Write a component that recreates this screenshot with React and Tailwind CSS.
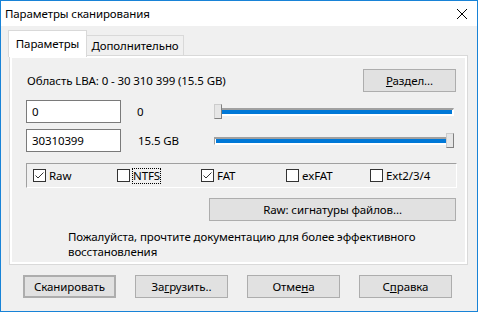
import React from "react";

const font = { fontFamily: '"Noto Sans", "Open Sans", sans-serif' };

const Btn = ({ children, className = "" }) => (
  <div
    className={`flex items-center justify-center h-[23px] w-[93px] bg-[#e1e1e1] border border-[#adadad] text-[11.5px] text-black ${className}`}
  >
    {children}
  </div>
);

const Slider = ({ atEnd }) => (
  <div className="relative w-[240px] h-[16px] flex items-center">
    <div className="w-full h-[8px] border-t-2 border-l border-t-[#a0a0a0] border-l-[#a0a0a0] border-b border-r border-b-white border-r-white bg-white flex items-center px-[1px]">
      <div className="w-full h-[4px] bg-[#0078d7]" />
    </div>
    <div
      className={`absolute top-0 h-[15px] w-[8px] bg-[#e6e6e6] border border-[#cccccc] border-r-[#808080] border-b-[#808080] ${
        atEnd ? "right-0" : "left-0"
      }`}
    />
  </div>
);

const Check = ({ label, checked, focus }) => (
  <div className="flex items-center">
    <div className="w-[13px] h-[13px] border border-[#333333] bg-white flex items-center justify-center">
      {checked && (
        <svg width="11" height="11" viewBox="0 0 11 11">
          <polyline points="1.5,5.5 4,8 9.5,2.5" fill="none" stroke="#333333" strokeWidth="1" />
        </svg>
      )}
    </div>
    <span
      className={`ml-[3px] leading-[14px] text-[11.5px] text-black ${
        focus ? "outline outline-1 outline-dotted outline-black" : ""
      }`}
    >
      {label}
    </span>
  </div>
);

export default function App() {
  return (
    <div
      className="w-[478px] h-[312px] border border-[#1883d7] bg-[#f0f0f0] flex flex-col text-black tracking-[-0.1px]"
      style={font}
    >
      <div className="h-[25px] bg-white flex items-center justify-between pl-[4px] pr-[9px]">
        <span className="text-[11.5px]">Параметры сканирования</span>
        <svg width="12" height="12" viewBox="0 0 12 12">
          <path d="M1 1 L11 11 M11 1 L1 11" stroke="#000" strokeWidth="1" />
        </svg>
      </div>

      <div className="flex flex-col pl-[7px]">
        <div className="flex items-end mt-[4px] relative z-10">
          <div className="h-[27px] w-[79px] bg-white border border-b-0 border-[#d9d9d9] flex items-center justify-center text-[11.5px] pb-[1px]">
            Параметры
          </div>
          <div className="h-[21px] w-[97px] bg-[#f0f0f0] border border-l-0 border-[#d9d9d9] flex items-center justify-center text-[11.5px] mb-[1px]">
            Дополнительно
          </div>
        </div>

        <div className="-mt-[2px] ml-[1px] w-[459px] h-[210px] border border-[#d9d9d9] bg-white p-[2px]">
          <div className="h-full bg-[#f0f0f0] flex flex-col pl-[14px] pr-[9px] pt-[11px]">
            <div className="flex items-center justify-between">
              <span className="text-[11.5px] ml-[1px]">Область LBA: 0 - 30 310 399 (15.5 GB)</span>
              <Btn className="h-[21px]">
                <span>
                  <span className="underline">Р</span>аздел...
                </span>
              </Btn>
            </div>

            <div className="flex items-center mt-[8px]">
              <div className="w-[95px] h-[23px] border border-[#7a7a7a] bg-white text-[11.5px] flex items-center pl-[5px]">
                0
              </div>
              <span className="ml-[16px] w-[77px] text-[11.5px]">0</span>
              <Slider />
            </div>

            <div className="flex items-center mt-[6px]">
              <div className="w-[95px] h-[23px] border border-[#7a7a7a] bg-white text-[11.5px] flex items-center pl-[5px]">
                30310399
              </div>
              <span className="ml-[17px] w-[76px] text-[11.5px]">15.5 GB</span>
              <Slider atEnd />
            </div>

            <div className="mt-[11px] w-[431px] h-[25px] border border-t-[#a0a0a0] border-l-[#a0a0a0] border-b-white border-r-white grid grid-cols-[84px_84px_85px_84px_1fr] items-center pl-[6px]">
              <Check label="Raw" checked />
              <Check label="NTFS" focus />
              <Check label="FAT" checked />
              <Check label="exFAT" />
              <Check label="Ext2/3/4" />
            </div>

            <div className="flex justify-end mt-[10px]">
              <Btn className="w-[247px] h-[21px]">Raw: сигнатуры файлов...</Btn>
            </div>

            <p className="mt-[8px] ml-[42px] text-[11.5px] leading-[15px]">
              Пожалуйста, прочтите документацию для более эффективного
              <br />
              восстановления
            </p>
          </div>
        </div>

        <div className="flex gap-[19px] mt-[10px] ml-[15px]">
          <Btn className="border-2 border-[#0078d7]">Сканировать</Btn>
          <Btn>
            <span>
              За<span className="underline">г</span>рузить..
            </span>
          </Btn>
          <Btn>
            <span>
              Отме<span className="underline">н</span>а
            </span>
          </Btn>
          <Btn>
            <span>
              С<span className="underline">п</span>равка
            </span>
          </Btn>
        </div>
      </div>
    </div>
  );
}
